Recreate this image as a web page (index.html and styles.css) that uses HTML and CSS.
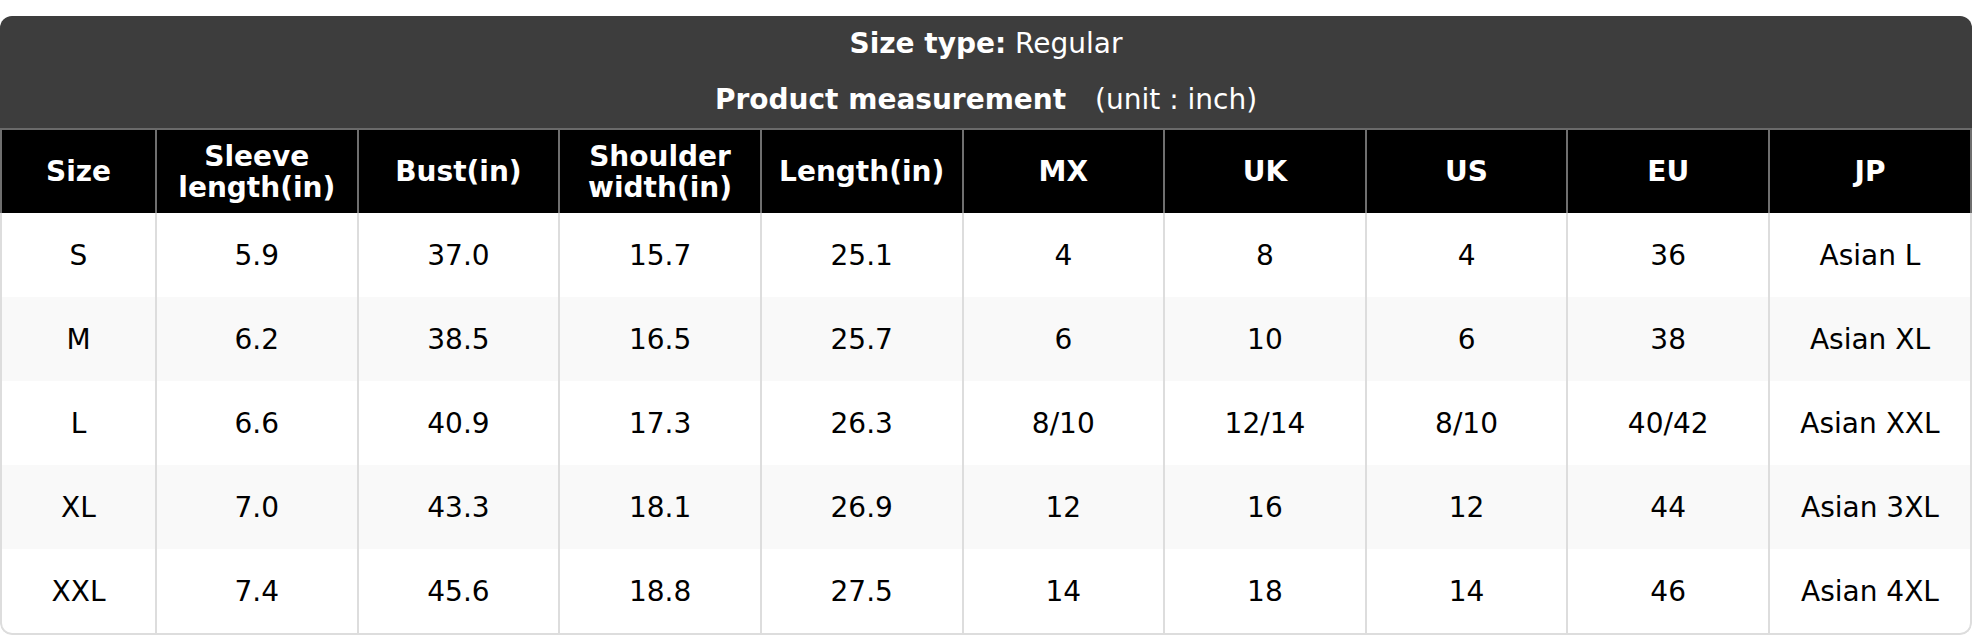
FILE: index.html
```html
<!DOCTYPE html>
<html>
<head>
<meta charset="utf-8">
<link rel="stylesheet" href="styles.css">
</head>
<body>
<div class="chart">
  <div class="caption">
    <div class="cap-line"><b>Size type:</b> Regular</div>
    <div class="cap-line"><b>Product measurement</b> <span class="unit">(unit : inch)</span></div>
  </div>
  <table class="sizes">
    <colgroup>
      <col class="c-size">
      <col><col><col><col><col><col><col><col>
      <col class="c-jp">
    </colgroup>
    <thead>
      <tr>
        <th>Size</th>
        <th>Sleeve<br>length(in)</th>
        <th>Bust(in)</th>
        <th>Shoulder<br>width(in)</th>
        <th>Length(in)</th>
        <th>MX</th>
        <th>UK</th>
        <th>US</th>
        <th>EU</th>
        <th>JP</th>
      </tr>
    </thead>
    <tbody>
      <tr><td>S</td><td>5.9</td><td>37.0</td><td>15.7</td><td>25.1</td><td>4</td><td>8</td><td>4</td><td>36</td><td>Asian L</td></tr>
      <tr><td>M</td><td>6.2</td><td>38.5</td><td>16.5</td><td>25.7</td><td>6</td><td>10</td><td>6</td><td>38</td><td>Asian XL</td></tr>
      <tr><td>L</td><td>6.6</td><td>40.9</td><td>17.3</td><td>26.3</td><td>8/10</td><td>12/14</td><td>8/10</td><td>40/42</td><td>Asian XXL</td></tr>
      <tr><td>XL</td><td>7.0</td><td>43.3</td><td>18.1</td><td>26.9</td><td>12</td><td>16</td><td>12</td><td>44</td><td>Asian 3XL</td></tr>
      <tr><td>XXL</td><td>7.4</td><td>45.6</td><td>18.8</td><td>27.5</td><td>14</td><td>18</td><td>14</td><td>46</td><td>Asian 4XL</td></tr>
    </tbody>
  </table>
</div>
</body>
</html>
```

FILE: styles.css
```css
html, body {
  margin: 0;
  padding: 0;
  background: #ffffff;
}

body {
  padding-top: 16px;
  font-family: "DejaVu Sans", "Liberation Sans", sans-serif;
  font-size: 28px;
}

.chart {
  width: 1972px;
  border-radius: 12px;
  overflow: hidden;
  background: #ffffff;
}

.caption {
  background: #3d3d3d;
  color: #ffffff;
  text-align: center;
  border-bottom: 2px solid #6a6a6a;
}

.cap-line {
  height: 56px;
  line-height: 56px;
}

.cap-line b {
  font-weight: bold;
}

.unit {
  margin-left: 20px;
}

.sizes {
  width: 100%;
  table-layout: fixed;
  border-collapse: separate;
  border-spacing: 0;
}

.c-size {
  width: 155px;
}

.c-jp {
  width: 204px;
}

.sizes th {
  background: #000000;
  color: #ffffff;
  font-weight: bold;
  line-height: 31px;
  height: 83px;
  padding: 0 4px;
  box-sizing: border-box;
  text-align: center;
  vertical-align: middle;
  border-left: 2px solid #6f6f6f;
}

.sizes th:last-child {
  border-right: 2px solid #6f6f6f;
}

.sizes td {
  height: 84px;
  padding: 0;
  box-sizing: border-box;
  text-align: center;
  vertical-align: middle;
  color: #000000;
  border-left: 2px solid #dddddd;
}

.sizes td:last-child {
  border-right: 2px solid #dddddd;
}

.sizes tbody tr:nth-child(even) td {
  background: #f9f9f9;
}

.sizes tbody tr:last-child td {
  height: 86px;
  border-bottom: 2px solid #dddddd;
}

.sizes tbody tr:last-child td:first-child {
  border-bottom-left-radius: 12px;
}

.sizes tbody tr:last-child td:last-child {
  border-bottom-right-radius: 12px;
}
```
